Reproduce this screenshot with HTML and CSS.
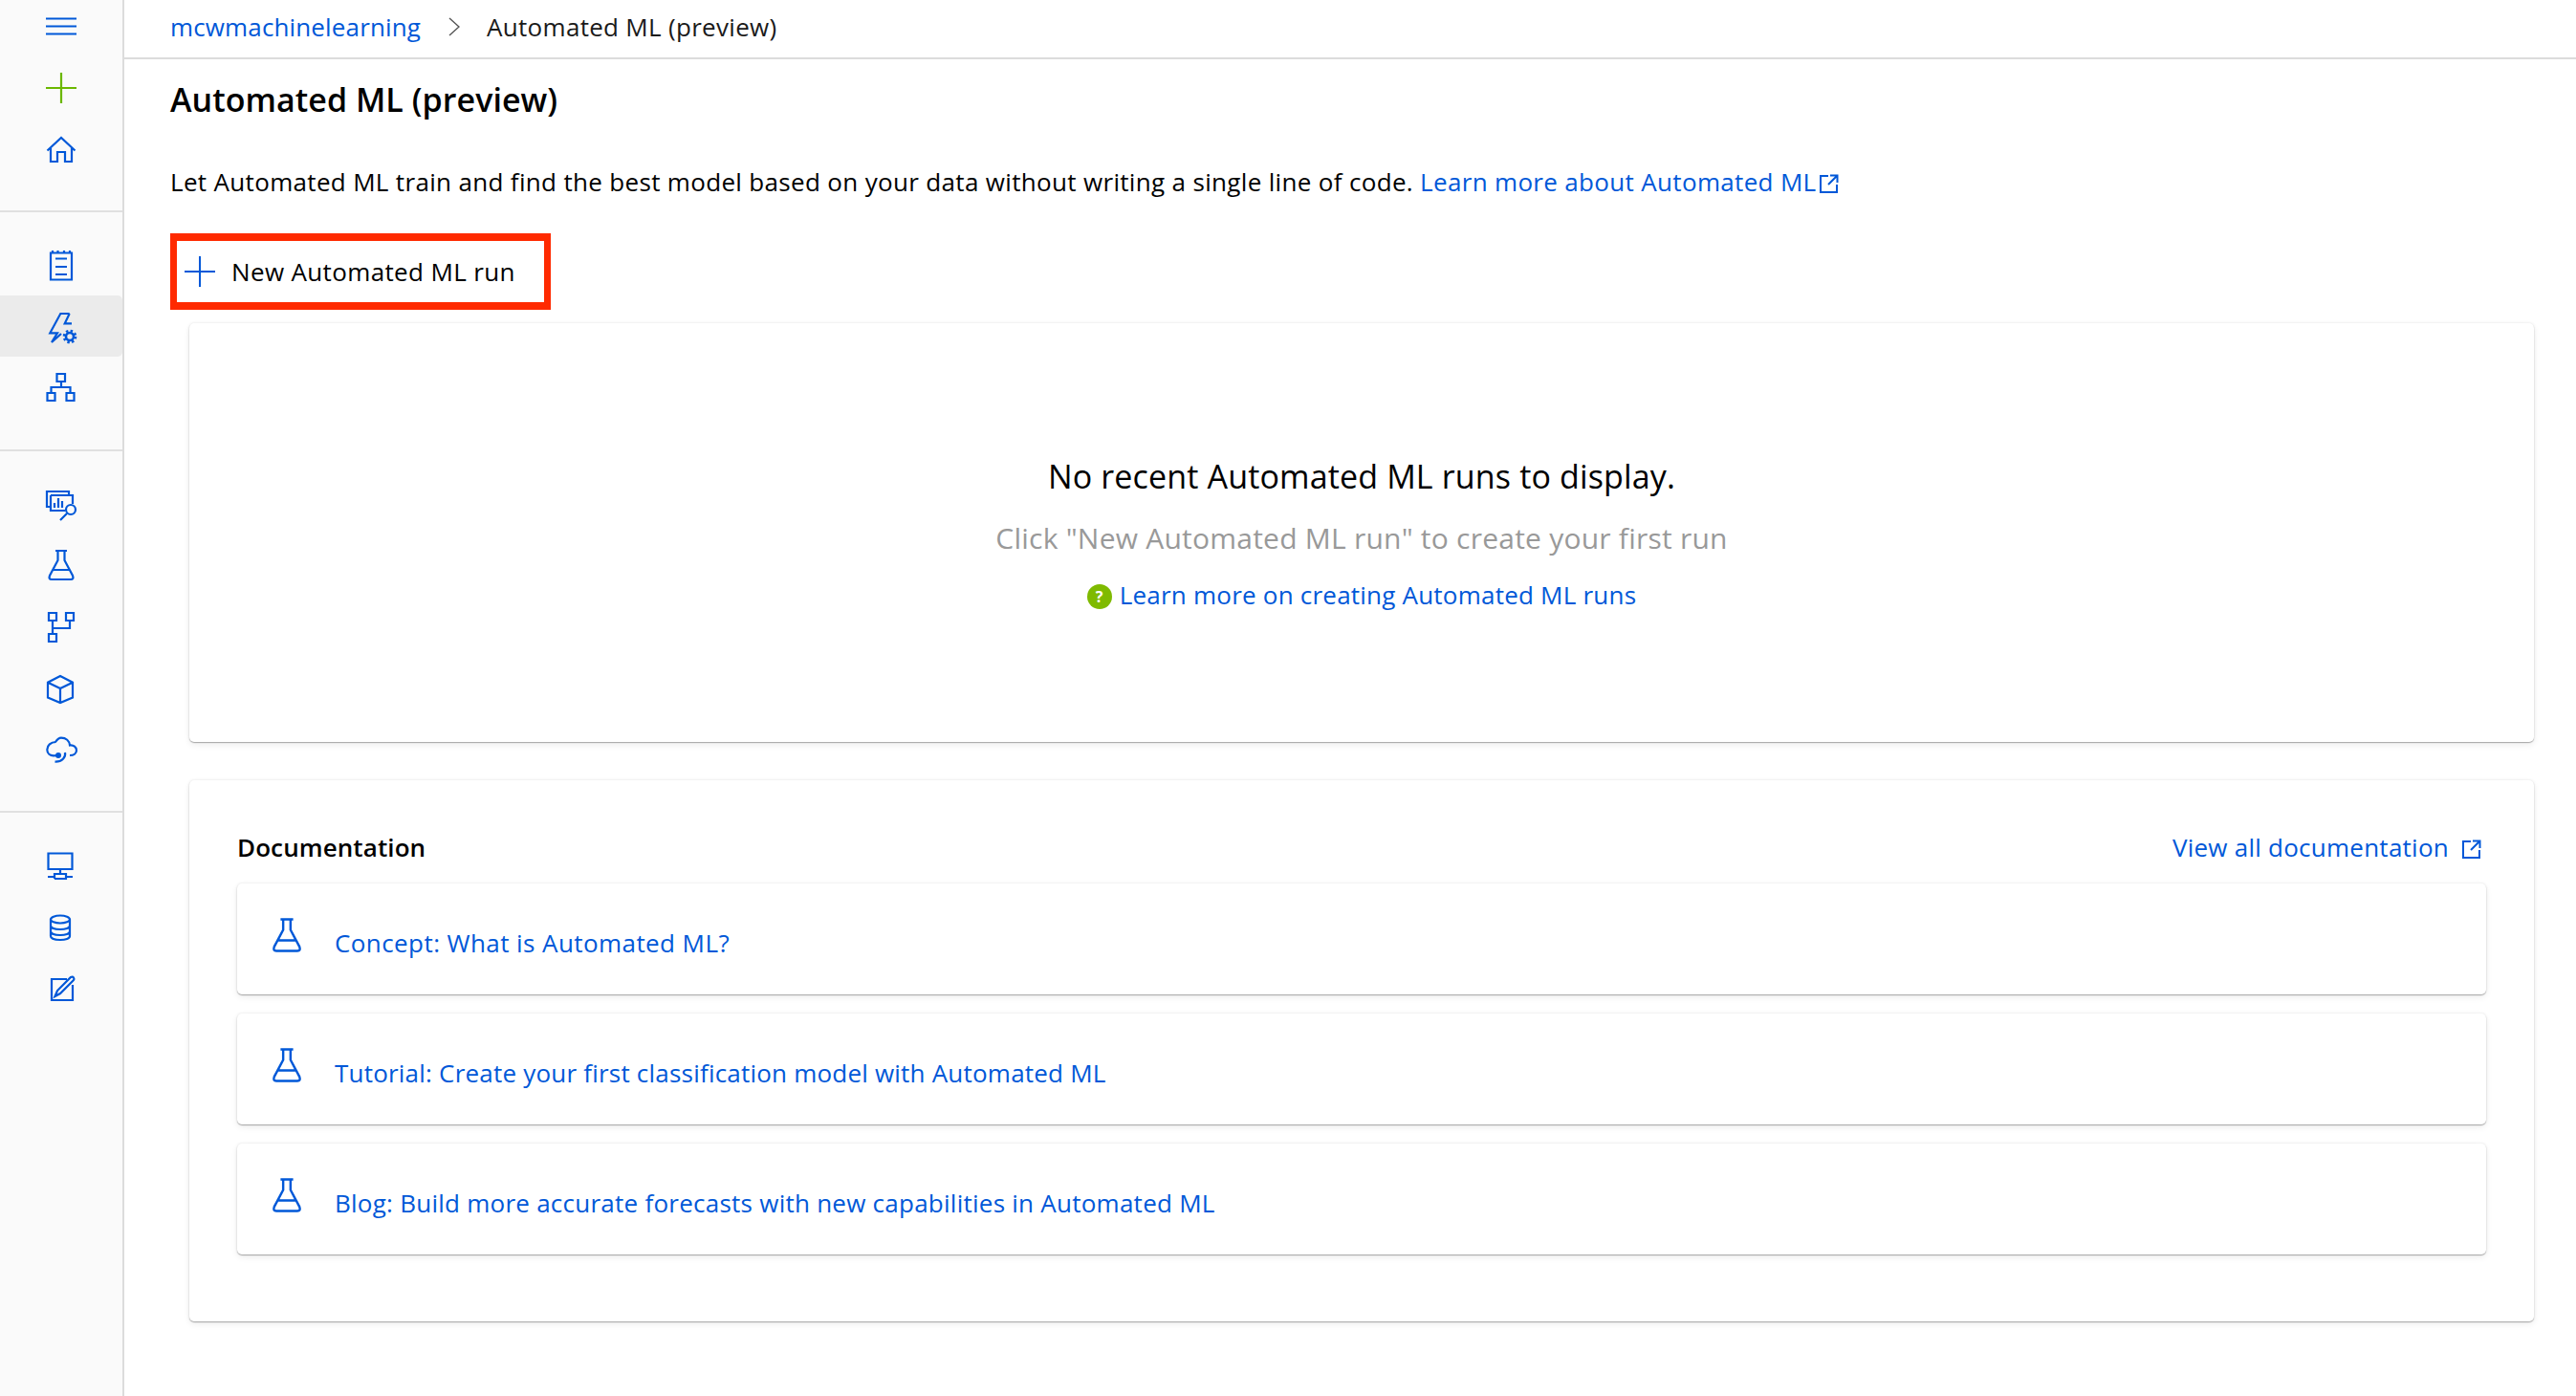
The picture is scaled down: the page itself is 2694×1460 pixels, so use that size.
FILE: index.html
```html
<!DOCTYPE html>
<html lang="en">
<head>
<meta charset="utf-8">
<title>Automated ML (preview)</title>
<link rel="stylesheet" href="styles.css">
</head>
<body>
<div class="app">
  <nav class="rail">
    <div class="group group-a">
      <div class="slot"><svg class="ico" viewBox="0 0 40 40"><path d="M4 11.500H36M4 19.500H36M4 27.500H36"/></svg></div>
      <div class="slot"><svg class="ico green" viewBox="0 0 40 40"><path d="M4 20H36M20 4V36"/></svg></div>
      <div class="slot"><svg class="ico" viewBox="0 0 40 40"><path d="M5.500 21.500L20 8L34.500 21.500M9 19V33H16V23H24V33H31V19"/></svg></div>
    </div>
    <div class="group group-b">
      <div class="slot"><svg class="ico" viewBox="0 0 40 40"><path d="M9 7.500H31V35.500H9ZM14 13.500H26M14 22H26M14 30H26M11 5V8M16.500 5V8M23 5V8M29 5V8"/></svg></div>
      <div class="slot selected"><svg class="ico" viewBox="0 0 40 40"><path d="M28.700 7H19.300L8.300 27.300H16L10 37L20 28M28.700 7L23.700 17.300H31"/><circle class="thin" cx="29" cy="31" r="4"/><circle class="gear" cx="29" cy="31" r="6"/></svg></div>
      <div class="slot"><svg class="ico" viewBox="0 0 40 40"><path d="M15.500 6H24V14H15.500ZM5.500 26H13.500V34H5.500ZM25.500 26H33.500V34H25.500ZM20 14V20M9.500 26V20H29.500V26"/></svg></div>
    </div>
    <div class="group group-c">
      <div class="slot"><svg class="ico" viewBox="0 0 40 40"><path d="M9 24H5V8H28V12M9 12H32V21M9 12V28H24M13 25V20M17 25V15M21 25V18M26 31L19 38"/><circle cx="30" cy="27" r="5"/></svg></div>
      <div class="slot"><svg class="ico" viewBox="0 0 40 40"><use href="#flask"/></svg></div>
      <div class="slot"><svg class="ico" viewBox="0 0 40 40"><path d="M7 5H15V13H7ZM25 5H33V13H25ZM7 27H15V35H7ZM11 13V27M11 21H29V13"/></svg></div>
      <div class="slot"><svg class="ico" viewBox="0 0 40 40"><path d="M19 6L32 12.700V28.500L19 34L6 28.500V12.700ZM6 12.700L19 19L32 12.700M19 19V34"/></svg></div>
      <div class="slot"><svg class="ico" viewBox="0 0 40 40"><path d="M14 10C16 7 18 5.700 20 5.700C25 5.700 28.500 9 29 13.500C33 13 36 15.500 36 18.700C36 22 33 24 29 24M14.500 10C9 10 5.300 13.500 5.300 18C5.300 22 8.500 24.300 12 24.300L17 24M24 21C25 26 21 31 13.500 30.700"/><circle class="solid" cx="17" cy="24" r="3"/></svg></div>
    </div>
    <div class="group group-d">
      <div class="slot"><svg class="ico" viewBox="0 0 40 40"><path d="M6.500 6.500H31.500V23H6.500ZM19 23V28M13 33V28H25V33H13M6 31H13M25 31H32"/></svg></div>
      <div class="slot"><svg class="ico" viewBox="0 0 40 40"><ellipse cx="19" cy="11.500" rx="10" ry="4"/><path d="M9 11.500V29C9 31.500 13.500 33 19 33S29 31.500 29 29V11.500M9 18C9 20.500 13.500 22 19 22S29 20.500 29 18M9 24C9 26.500 13.500 28 19 28S29 26.500 29 24"/></svg></div>
      <div class="slot"><svg class="ico" viewBox="0 0 40 40"><path d="M26 10H10V32H32V16M13.500 28L16 22L30 8Q32 7 33 8.500Q34 10 33 11L19 25Z"/></svg></div>
    </div>
  </nav>

  <div class="content">
    <header class="crumbs">
      <a class="link crumb-link">mcwmachinelearning</a>
      <svg class="chevron" viewBox="0 0 12 20"><path d="M1 1L11 10L1 19"/></svg>
      <span class="crumb-current">Automated ML (preview)</span>
    </header>

    <main class="page">
      <h1 class="title">Automated ML (preview)</h1>
      <p class="intro">Let Automated ML train and find the best model based on your data without writing a single line of code. <a class="link">Learn more about Automated ML</a><svg class="ext ext-tight" viewBox="0 0 20 20"><use href="#external"/></svg></p>

      <button class="new-run" type="button">
        <svg class="new-plus" viewBox="0 0 32 32"><path d="M0 16H32M16 0V32"/></svg>
        <span>New Automated ML run</span>
      </button>

      <section class="card empty">
        <h2 class="empty-title">No recent Automated ML runs to display.</h2>
        <p class="empty-sub">Click "New Automated ML run" to create your first run</p>
        <p class="empty-link"><span class="help">?</span><a class="link">Learn more on creating Automated ML runs</a></p>
      </section>

      <section class="card docs">
        <div class="docs-head">
          <h3 class="docs-title">Documentation</h3>
          <a class="link docs-all">View all documentation<svg class="ext" viewBox="0 0 20 20"><use href="#external"/></svg></a>
        </div>
        <div class="doc-list">
          <a class="card doc-item"><svg class="ico doc-flask" viewBox="0 0 40 40"><use href="#flask"/></svg><span class="link doc-text doc-text-wide">Concept: What is Automated ML?</span></a>
          <a class="card doc-item"><svg class="ico doc-flask" viewBox="0 0 40 40"><use href="#flask"/></svg><span class="link doc-text doc-text-tight">Tutorial: Create your first classification model with Automated ML</span></a>
          <a class="card doc-item"><svg class="ico doc-flask" viewBox="0 0 40 40"><use href="#flask"/></svg><span class="link doc-text">Blog: Build more accurate forecasts with new capabilities in Automated ML</span></a>
        </div>
      </section>
    </main>
  </div>
</div>

<svg class="defs" aria-hidden="true">
  <symbol id="flask" viewBox="0 0 40 40"><path d="M14 5H26M16.500 5V15L8 31Q6.500 35 10 35H30Q33.500 35 32 31L23.500 15V5M12 25H28"/></symbol>
  <symbol id="external" viewBox="0 0 20 20"><path d="M9 2H1V19H18V11M11 1.500H18.500V9M18 2L9 11"/></symbol>
</svg>
</body>
</html>
```

FILE: styles.css
```css
* { box-sizing: border-box; }
html, body { margin: 0; height: 100%; }
body { font-family: "Open Sans", "Noto Sans", sans-serif; color: #000; background: #fff; overflow: hidden; }
h1, h2, h3, p { margin: 0; font-weight: 400; }
.defs { display: none; }
.app { display: flex; height: 1460px; }

.rail { flex: 0 0 130px; background: #fafafa; border-right: 2px solid #dcdcdc; }
.group { border-bottom: 2px solid #e0e0e0; }
.group-a { margin-top: -4px; height: 226px; }
.group-b { height: 250px; padding-top: 23px; }
.group-c { height: 378px; padding-top: 21px; }
.group-c .slot { height: 65px; }
.group-d { border-bottom: 0; padding-top: 24px; }
.slot { height: 64px; display: flex; align-items: center; justify-content: center; }
.slot.selected { background: #ebebeb; border-radius: 0 5px 5px 0; }
.ico { width: 40px; height: 40px; fill: none; stroke: #0058d8; stroke-width: 2.2; overflow: visible; }
.ico.green { stroke: #6bb700; }
.ico .solid { fill: #0058d8; stroke: none; }
.ico .thin { stroke-width: 2.6; }
.ico .gear { stroke-width: 2.6; stroke-dasharray: 2.4 2.3; }

.content { flex: 1; min-width: 0; }
.crumbs { height: 62px; padding: 0 0 4px 48px; border-bottom: 2px solid #dcdcdc; display: flex; align-items: center; font-size: 26px; }
.link { color: #0058d8; text-decoration: none; }
.crumb-link { letter-spacing: 0.14px; }
.chevron { width: 12px; height: 20px; margin: 0 28px 0 29px; fill: none; stroke: #555; stroke-width: 1.4; }
.crumb-current { color: #1a1a1a; letter-spacing: 0.3px; }

.page { padding: 0 44px 0 48px; }
.title { margin-top: 17px; font-size: 34px; font-weight: 600; line-height: 50px; letter-spacing: 0.05px; }
.intro { margin-top: 41px; font-size: 26px; line-height: 40px; letter-spacing: 0.33px; white-space: nowrap; }
.ext { width: 20px; height: 20px; margin-left: 14px; fill: none; stroke: #0058d8; stroke-width: 2; vertical-align: -2px; }
.ext-tight { margin-left: 3px; }

.new-run { margin-top: 34px; width: 398px; height: 80px; padding: 0 0 0 8px; display: flex; align-items: center; gap: 17px; background: #fff; border: 7px solid #ff2a00; border-width: 8px 7px; font: inherit; font-size: 26px; letter-spacing: 0.36px; color: #000; }
.new-plus { width: 32px; height: 32px; fill: none; stroke: #0058d8; stroke-width: 2; flex: none; }

.card { background: #fff; border-radius: 5px; box-shadow: 0 1px 1px rgba(0,0,0,.28), 0 3px 7px rgba(0,0,0,.07), 0 0 3px rgba(0,0,0,.1); }
.empty { margin: 14px 0 0 20px; height: 438px; padding-top: 135px; text-align: center; }
.empty-title { font-size: 34px; line-height: 50px; letter-spacing: 0.15px; }
.empty-sub { margin-top: 20px; font-size: 30px; line-height: 40px; color: #999; letter-spacing: 0.23px; }
.empty-link { margin-top: 19px; font-size: 26px; line-height: 40px; letter-spacing: 0.22px; display: flex; justify-content: center; align-items: center; gap: 8px; }
.help { width: 26px; height: 26px; border-radius: 50%; background: #7fba00; color: #fff; font-size: 16px; font-weight: 700; line-height: 26px; text-align: center; margin-top: 4px; }

.docs { margin: 40px 0 0 20px; height: 566px; padding: 50px 50px 70px; }
.docs-head { display: flex; justify-content: space-between; height: 40px; padding-right: 5px; }
.docs-title { font-size: 26px; font-weight: 600; line-height: 40px; letter-spacing: 0.1px; }
.docs-all { font-size: 26px; line-height: 40px; letter-spacing: 0.25px; }
.doc-list { margin-top: 18px; display: flex; flex-direction: column; gap: 20px; }
.doc-item { display: flex; height: 116px; padding-left: 30px; }
.doc-flask { width: 44px; height: 44px; margin-top: 32px; flex: none; }
.doc-text { margin: 42px 0 0 28px; font-size: 26px; line-height: 40px; letter-spacing: 0.25px; }
.doc-text-wide { letter-spacing: 0.42px; }
.doc-text-tight { letter-spacing: 0.21px; }
```
